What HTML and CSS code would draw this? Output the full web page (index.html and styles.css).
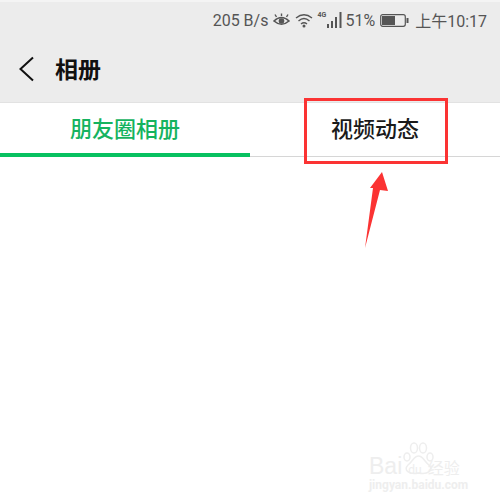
FILE: index.html
```html
<!DOCTYPE html>
<html lang="zh-CN">
<head>
    <meta charset="UTF-8">
    <meta name="viewport" content="width=device-width, initial-scale=1.0">
    <title>相册</title>
    <link rel="stylesheet" href="styles.css">
</head>
<body>
    <header class="top">
        <div class="status">
            <span>205 B/s</span>
            <svg class="eye" width="17" height="15" viewBox="0 0 17 15">
                <path d="M1 8 Q8.5 1 16 8 Q8.5 14.500 1 8Z" fill="none" stroke="#555" stroke-width="1.600"/>
                <circle cx="8.500" cy="8" r="2.800" fill="#555"/>
                <path d="M3.500 4 L2 1.500 M8.500 3 V0.500 M13.500 4 L15 1.500" stroke="#555" stroke-width="1.400"/>
            </svg>
            <svg class="wifi" width="18" height="15" viewBox="0 0 18 15">
                <path d="M1 5 Q9 -1.500 17 5 M3.500 8 Q9 3 14.500 8 M6 11 Q9 8.500 12 11" fill="none" stroke="#555" stroke-width="1.400"/>
                <circle cx="9" cy="13" r="1.500" fill="#555"/>
            </svg>
            <span class="net">4G</span>
            <svg class="signal" width="15" height="16" viewBox="0 0 15 16">
                <path d="M0 16 V12 H2 V16Z M4 16 V9 H6 V16Z M8 16 V5 H10 V16Z M12.500 16 V0 H14.500 V16Z" fill="#555"/>
            </svg>
            <span class="pct">51%</span>
            <svg class="battery" width="29" height="13" viewBox="0 0 29 13">
                <rect x="0.700" y="0.700" width="24.600" height="11.600" rx="2" fill="none" stroke="#555" stroke-width="1.200"/>
                <rect x="2" y="2" width="13" height="9" fill="#555"/>
                <rect x="26.500" y="4" width="2" height="5" fill="#555"/>
            </svg>
            <span>上午10:17</span>
        </div>
        <div class="nav">
            <svg class="back" width="16" height="26" viewBox="0 0 16 26">
                <path d="M15 1.500 L2.500 13 L15 24.500" fill="none" stroke="#111" stroke-width="2"/>
            </svg>
            <h1>相册</h1>
        </div>
    </header>

    <div class="tabs">
        <div class="tab active">朋友圈相册</div>
        <div class="tab">视频动态</div>
    </div>

    <div class="mark-box"></div>
    <svg class="mark-arrow" width="40" height="90" viewBox="0 0 40 90">
        <path d="M22 2 L10 18 L13 18 L5 78 L20 20 L28 21Z" fill="#fb3333"/>
    </svg>

    <div class="watermark">
        <svg class="paw" width="33" height="34" viewBox="0 0 33 34">
            <g fill="none" stroke="#eeeeee" stroke-width="1.500">
                <ellipse cx="5" cy="15" rx="3" ry="4"/>
                <ellipse cx="12" cy="6" rx="3.500" ry="5"/>
                <ellipse cx="21" cy="6" rx="3.500" ry="5"/>
                <ellipse cx="28" cy="15" rx="3" ry="4"/>
                <path d="M16.500 14 C12 14 11 19 6 23 C1 28 7 33 16.500 31 C26 33 32 28 27 23 C22 19 21 14 16.500 14Z"/>
            </g>
        </svg>
        <div class="brand"><span class="bai">Bai</span><span class="du">du</span><span class="jy">经验</span></div>
        <div class="url">jingyan.baidu.com</div>
    </div>
</body>
</html>
```

FILE: styles.css
```css
body {
    font-family: "Roboto", "Noto Sans CJK SC", sans-serif;
    margin: 0;
    background: white;
    height: 502px;
    overflow: hidden;
    position: relative;
}
.top {
    background: #ececec;
    height: 100px;
    border-top: 2px solid #f4f4f4;
    border-bottom: 1px solid #e2e2e2;
}
.status {
    height: 36px;
    display: flex;
    align-items: center;
    justify-content: flex-end;
    padding-right: 13px;
    color: #555;
    font-size: 16px;
}
.eye {
    margin-left: 5px;
}
.wifi {
    margin-left: 5px;
}
.net {
    font-size: 7px;
    font-weight: bold;
    width: 10px;
    align-self: flex-start;
    margin: 9px 0 0 4px;
}
.signal {
    margin: 0 3px 0 0;
}
.battery {
    margin: 0 6px 0 5px;
}
.nav {
    height: 62px;
    display: flex;
    align-items: center;
    padding-left: 18px;
}
h1 {
    font-size: 23px;
    font-weight: bold;
    color: #111;
    margin: 0 0 3px 21px;
}
.tabs {
    display: flex;
    height: 53px;
    border-bottom: 1px solid #d6d6d6;
}
.tab {
    width: 250px;
    text-align: center;
    font-size: 22px;
    font-weight: 500;
    line-height: 54px;
    color: #1a1a1a;
}
.tab.active {
    color: #15b35f;
    box-sizing: border-box;
    height: 54px;
    border-bottom: 4px solid #07c160;
}
.mark-box {
    position: absolute;
    left: 304px;
    top: 98px;
    width: 138px;
    height: 60px;
    border: 3px solid #fb3333;
}
.mark-arrow {
    position: absolute;
    left: 360px;
    top: 170px;
}
.watermark {
    position: absolute;
    left: 369px;
    top: 442px;
    width: 120px;
    color: #eeeeee;
}
.paw {
    position: absolute;
    left: 33px;
    top: 0;
}
.brand {
    position: relative;
    display: flex;
    align-items: baseline;
    margin-top: 14px;
    height: 20px;
    line-height: 20px;
    white-space: nowrap;
}
.bai {
    font-size: 23px;
    font-family: "Liberation Sans", sans-serif;
}
.du {
    font-size: 12px;
    margin: 0 6px 0 6px;
}
.jy {
    font-size: 16px;
}
.url {
    font-size: 12px;
    font-weight: bold;
    line-height: 14px;
    margin-top: 2px;
    white-space: nowrap;
}
```
